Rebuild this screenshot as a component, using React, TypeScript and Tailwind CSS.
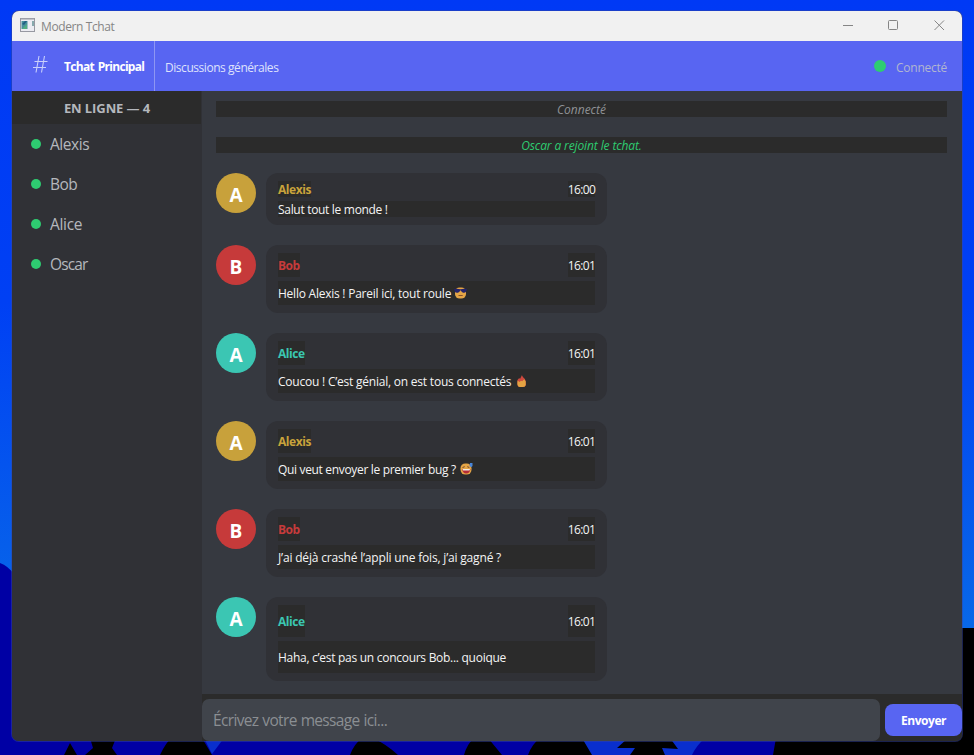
import React from "react";

type Author = { name: string; text: string; ring: string };

const authors: Record<string, Author> = {
  alexis: { name: "Alexis", text: "text-[#c9a33b]", ring: "bg-[#c8a13b]" },
  bob: { name: "Bob", text: "text-[#c63b3b]", ring: "bg-[#c63a3a]" },
  alice: { name: "Alice", text: "text-[#3bc6b1]", ring: "bg-[#3bc6b3]" },
};

function Cool() {
  return (
    <svg className="ml-[3px] h-3 w-[13px]" viewBox="0 0 13 12">
      <rect x="1" y=".4" width="11" height="11.2" rx="4.6" fill="#e5a546" />
      <path d="M0 2 Q3 1.4 6.5 2.2 Q10 1.4 13 2 L12.2 4.6 Q11 6.2 9 5.7 Q7.5 5 6.8 3.6 H6.2 Q5.5 5.4 3.8 5.7 Q1.3 6 .7 4.4Z" fill="#25246a" />
      <path d="M4.5 8.5 H8.7" stroke="#87522c" strokeWidth="1" />
    </svg>
  );
}

function Flame() {
  return (
    <svg className="ml-[6px] h-3 w-[9px]" viewBox="0 0 9 12">
      <path d="M5 0 C5 2 8 3 8.7 6 L8.8 10 Q8.5 12 6 12 H3 Q.6 12 .4 9 L.5 5 L2.2 3 L3 4 Z" fill="#cf493e" />
      <path d="M.5 5.5 L2.5 7 L4 5.8 L5.2 6.2 L7.2 4.2 L8.7 6.5 V10 Q8.4 12 6 12 H3 Q.6 12 .4 9Z" fill="#e4a342" />
    </svg>
  );
}

function Sweat() {
  return (
    <svg className="ml-1 h-3 w-[13px]" viewBox="0 0 13 12">
      <rect x=".5" y=".4" width="11" height="11.2" rx="4.8" fill="#e5a546" />
      <path d="M2.5 4.5 L4.7 3.7 M7.3 3.7 L9.3 4.5" stroke="#71452a" strokeWidth="1" />
      <path d="M2 6 H10.5 Q9.5 10.5 6.2 10.5 Q3 10.5 2 6Z" fill="#b52c36" />
      <path d="M2.5 6 H10 L9.5 7.6 H3Z" fill="#f1e9df" />
      <path d="M10 0 H12.5 V3 L11.3 4.3 L9.5 3Z" fill="#4885d8" />
    </svg>
  );
}

type Message = {
  from: string;
  time: string;
  body: string;
  track: string;
  row: string;
  emoji?: React.ReactNode;
};

const messages: Message[] = [
  { from: "alexis", time: "16:00", body: "Salut tout le monde !", track: "tracking-[-0.31px]", row: "h-4" },
  { from: "bob", time: "16:01", body: "Hello Alexis ! Pareil ici, tout roule", track: "tracking-[-0.24px]", row: "h-6", emoji: <Cool /> },
  { from: "alice", time: "16:01", body: "Coucou ! C’est génial, on est tous connectés", track: "tracking-[-0.22px]", row: "h-6", emoji: <Flame /> },
  { from: "alexis", time: "16:01", body: "Qui veut envoyer le premier bug ?", track: "tracking-[-0.33px]", row: "h-6", emoji: <Sweat /> },
  { from: "bob", time: "16:01", body: "J’ai déjà crashé l’appli une fois, j’ai gagné ?", track: "tracking-[-0.18px]", row: "h-6" },
  { from: "alice", time: "16:01", body: "Haha, c’est pas un concours Bob... quoique", track: "tracking-[-0.28px]", row: "h-8" },
];

function Bubble({ m }: { m: Message }) {
  const a = authors[m.from];
  return (
    <div className="flex items-start gap-2.5">
      <div className={`flex size-10 items-center justify-center rounded-full pt-1 text-[19px] font-bold text-white ${a.ring}`}>
        {a.name[0]}
      </div>
      <div className="flex w-[341px] flex-col gap-1 rounded-[12px] bg-[#303136] px-3 py-2 text-[12px] text-[#f4f4f4]">
        <div className="flex justify-between">
          <span className={`flex items-center bg-[#2b2b2b] pt-0.5 font-bold tracking-[-0.45px] ${m.row} ${a.text}`}>{a.name}</span>
          <span className={`flex w-[27px] items-center justify-center bg-[#2b2b2b] pt-0.5 tracking-[-0.6px] ${m.row}`}>{m.time}</span>
        </div>
        <div className={`flex items-center bg-[#2b2b2b] whitespace-nowrap ${m.row}`}>
          <span className={`pt-0.5 ${m.track}`}>{m.body}</span>
          {m.emoji}
        </div>
      </div>
    </div>
  );
}

function Wallpaper() {
  return (
    <svg className="absolute inset-0 size-full" viewBox="0 0 974 755">
      <defs>
        <linearGradient id="sky" x1="0" y1="0" x2="0" y2="1">
          <stop offset="0" stopColor="#0039f5" />
          <stop offset=".4" stopColor="#0040f4" />
          <stop offset=".83" stopColor="#0868e8" />
        </linearGradient>
      </defs>
      <rect width="974" height="755" fill="url(#sky)" />
      <path d="M0 563 Q8 566 14 574 V755 H0Z" fill="#0000a4" />
      <path d="M955 628 H974 V755 H955Z" fill="#000" />
      <rect x="10" y="738" width="964" height="17" fill="#000" />
      <path d="M0 738 H172 Q166 742 160 755 H0Z M202 738 H362 Q354 744 350 755 H212Z M373 738 H474 Q467 744 464 755 H398 Q386 744 373 738Z M488 738 H540 Q532 744 528 755 H502Z M690 738 H776 L773 755 H680Z" fill="#0000a4" />
      <path d="M64 755 L70 743 L77 755Z M85 755 L93 748 L90 738 H116 L112 748 L117 755Z" fill="#000" />
      <path d="M204 738 H224 L212 754Z M582 738 H628 L617 748 L635 748 L630 755 H592Z M670 738 H705 Q696 746 692 755 H665 L662 748 L678 749Z" fill="#092fcd" />
    </svg>
  );
}

function TitleBar() {
  return (
    <div className="flex h-[30px] shrink-0 items-center bg-[#f1f1f1] pl-2 text-[#858585]">
      <svg className="mb-0.5 h-3.5 w-[15px]" viewBox="0 0 15 14">
        <rect x=".5" y=".5" width="14" height="13" fill="#ececf2" stroke="#9799a2" />
        <path d="M1 1.3 H14" stroke="#b8bac0" />
        <rect x="1.5" y="3" width="6" height="8" fill="#478f9c" />
        <path d="M2 6 L5 3 L7 3 L4 7Z" fill="#205e83" />
        <path d="M2 11 L7 6 V11Z" fill="#52ad80" />
        <rect x="12" y="3" width="2" height="5" fill="#87a9ad" />
      </svg>
      <span className="ml-[6px] pt-px text-[12px] tracking-[-0.4px]">Modern Tchat</span>
      <svg className="mr-[17px] mb-0.5 ml-auto h-3 w-[103px]" viewBox="0 0 103 12" fill="none" stroke="#858585">
        <path d="M1 6.5 H11" />
        <rect x="46.5" y="1.5" width="9" height="9" rx="1" />
        <path d="M92.5 1.5 L102 11 M102 1.5 L92.5 11" />
      </svg>
    </div>
  );
}

const online = [
  { name: "Alexis", track: "tracking-[-0.45px]" },
  { name: "Bob", track: "tracking-[-0.6px]" },
  { name: "Alice", track: "tracking-[-0.3px]" },
  { name: "Oscar", track: "tracking-[-0.9px]" },
];

export default function App() {
  return (
    <div className="relative h-[755px] w-[974px] overflow-hidden pt-[11px] pl-3 font-['Open_Sans','Noto_Sans',sans-serif] leading-none">
      <Wallpaper />
      <div className="relative flex h-[730px] w-[950px] flex-col overflow-hidden rounded-[7px] bg-[#303136] shadow-[0_0_0_1px_#3444a080]">
        <TitleBar />
        <header className="flex h-[50px] shrink-0 items-center bg-[#5865f2]">
          <svg className="mb-1 ml-[21px] h-[18px] w-[15px]" viewBox="0 0 15 18" fill="none" stroke="#c9d0fb" strokeWidth="1.1">
            <path d="M6 1 L3 17.5 M11.5 1 L8.5 17.5 M1.5 6.5 H14.5 M0 12.5 H13" />
          </svg>
          <span className="ml-4 w-[90px] pt-0.5 text-[12px] font-bold tracking-[-0.7px] whitespace-nowrap text-white [word-spacing:1.3px]">Tchat Principal</span>
          <span className="h-full w-px bg-[#8e96f3]" />
          <span className="ml-2.5 pt-[3px] text-[12px] tracking-[-0.45px] text-[#dfe2fc]">Discussions générales</span>
          <span className="ml-auto size-3 rounded-full bg-[#2ecc71]" />
          <span className="mr-[15px] ml-2.5 pt-[3px] text-[12px] tracking-[-0.25px] text-[#b1b6d0]">Connecté</span>
        </header>
        <div className="flex min-h-0 flex-1">
          <aside className="w-[190px] shrink-0 bg-[#303136]">
            <div className="flex h-[33px] w-[189px] items-center justify-center bg-[#2b2b2b] pt-px pl-px text-[13px] font-bold text-[#b5b8bd]">
              <span className="tracking-[-0.1px]">EN LIGNE — 4</span>
            </div>
            {online.map((u) => (
              <div key={u.name} className={`flex h-10 items-center gap-[9px] pl-[19px] text-[15.5px] text-[#b5b8bd] ${u.track}`}>
                <span className="size-2.5 rounded-full bg-[#2ecc71]" />
                <span className="pt-0.5">{u.name}</span>
              </div>
            ))}
          </aside>
          <main className="flex min-w-0 flex-1 flex-col bg-[#363940]">
            <div className="flex flex-1 flex-col gap-5 pt-2.5 pr-[15px] pl-3.5">
              <div className="flex h-4 items-center justify-center bg-[#2b2b2b] pt-0.5 text-[12px] italic text-[#8f9296]">
                <span>Connecté</span>
              </div>
              <div className="flex h-4 items-center justify-center bg-[#2b2b2b] pt-0.5 text-[12px] tracking-[-0.12px] italic text-[#2ecc71]">
                <span>Oscar a rejoint le tchat.</span>
              </div>
              {messages.map((m) => (
                <Bubble key={m.body} m={m} />
              ))}
            </div>
            <div className="flex h-[47px] shrink-0 items-start gap-[5px] bg-[#2b2b2b] pt-[5px]">
              <div className="flex h-[42px] w-[678px] items-center rounded-[7px] bg-[#40444b] pt-0.5 pl-[11px] text-[15.5px] tracking-[-0.66px] text-[#8b8f93] [word-spacing:0.6px]">
                <span>Écrivez votre message ici...</span>
              </div>
              <button className="mt-[5px] flex h-8 w-[77px] items-center justify-center rounded-[8px] bg-[#5865f2] pt-0.5 text-[12px] font-bold text-white">
                <span className="tracking-[-0.45px]">Envoyer</span>
              </button>
            </div>
          </main>
        </div>
      </div>
    </div>
  );
}
